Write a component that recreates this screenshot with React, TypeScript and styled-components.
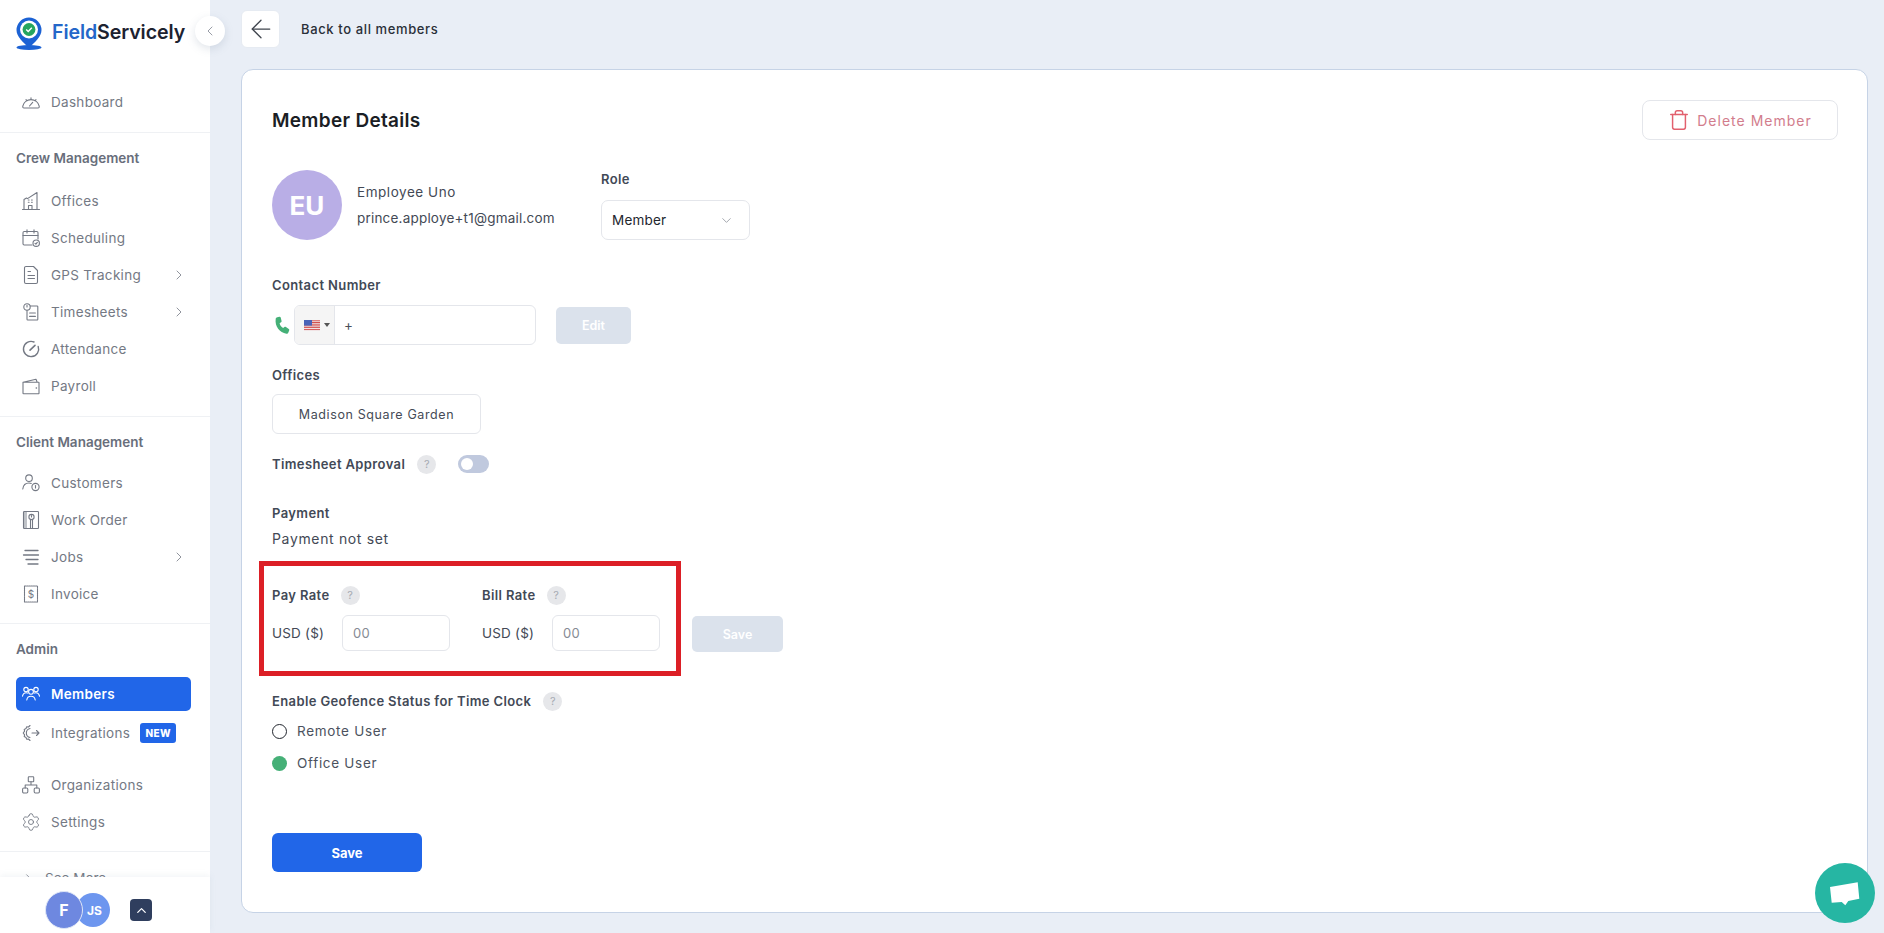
import React from 'react';
import styled, { createGlobalStyle } from 'styled-components';
import { ArrowLeft, ChevronDown, ChevronLeft, ChevronRight, ChevronUp, Settings, Trash } from 'lucide-react';

const GlobalStyle = createGlobalStyle`
  html, body {
    margin: 0;
    padding: 0;
    height: 100%;
    background: #e9eef6;
    font-family: Inter, "Open Sans", "Liberation Sans", sans-serif;
    overflow: hidden;
  }
  * { box-sizing: border-box; }
`;

const Page = styled.div`
  display: flex;
  width: 1884px;
  height: 933px;
  position: relative;
`;

const Sidebar = styled.aside`
  position: relative;
  width: 210px;
  height: 933px;
  flex-shrink: 0;
  display: flex;
  flex-direction: column;
  background: #ffffff;
`;

const LogoBar = styled.div`
  height: 62px;
  display: flex;
  align-items: center;
  gap: 10px;
  padding-left: 16px;
  svg { margin-top: 5px; }
`;

const LogoText = styled.div`
  margin-top: 1px;
  font-size: 19.6px;
  font-weight: 600;
  color: #1c2230;
  letter-spacing: -0.1px;
  span { color: #2467c9; }
`;

const CollapseButton = styled.button`
  position: absolute;
  left: 195px;
  top: 16px;
  width: 30px;
  height: 30px;
  border: none;
  border-radius: 50%;
  padding: 0;
  background: #ffffff;
  color: #7d838f;
  box-shadow: 0 3px 8px rgba(120, 135, 160, 0.22);
  display: flex;
  align-items: center;
  justify-content: center;
`;

const NavScroll = styled.nav`
  flex: 1;
  min-height: 0;
  overflow: hidden;
  padding-top: 21.5px;
`;

const Divider = styled.div<{ $top: number }>`
  height: 1px;
  background: #eff1f4;
  margin-top: ${(p) => p.$top}px;
`;

const SectionTitle = styled.div<{ $top: number; $bottom: number }>`
  height: 18px;
  line-height: 18px;
  padding-left: 16px;
  margin: ${(p) => p.$top}px 0 ${(p) => p.$bottom}px;
  font-size: 13.5px;
  font-weight: 600;
  color: #686e7b;
`;

const NavItem = styled.div<{ $top?: number }>`
  height: 37px;
  margin-top: ${(p) => p.$top ?? 0}px;
  padding: 0 23px 0 21px;
  display: flex;
  align-items: center;
  gap: 10px;
  font-size: 13.5px;
  font-weight: 400;
  letter-spacing: 0.3px;
  color: #747984;
  svg { flex-shrink: 0; }
`;

const ActiveItem = styled.div`
  height: 34px;
  margin: 0 19px 0 16px;
  padding-left: 5px;
  border-radius: 5px;
  background: #2166e8;
  display: flex;
  align-items: center;
  gap: 10px;
  font-size: 13.5px;
  font-weight: 600;
  letter-spacing: 0.3px;
  color: #ffffff;
`;

const NavLabel = styled.span`
  white-space: nowrap;
`;

const MoreChevron = styled(ChevronRight)`
  margin-left: auto;
`;

const NewBadge = styled.span`
  width: 36px;
  height: 20px;
  border-radius: 3px;
  background: #2166e8;
  color: #ffffff;
  font-size: 10px;
  font-weight: 800;
  display: flex;
  align-items: center;
  justify-content: center;
`;

const SeeMore = styled.div`
  height: 37px;
  margin-top: 8px;
  padding-left: 21px;
  display: flex;
  align-items: center;
  gap: 9px;
  font-size: 13.5px;
  color: #747984;
`;

const SidebarFooter = styled.div`
  height: 56px;
  flex-shrink: 0;
  background: #ffffff;
  box-shadow: 0 -2px 6px rgba(140, 155, 180, 0.1);
  padding: 10px 0 0 45px;
  display: flex;
  align-items: center;
`;

const UserBubble = styled.div<{ $size: number; $bg: string; $fs: number; $front?: boolean }>`
  width: ${(p) => p.$size}px;
  height: ${(p) => p.$size}px;
  border-radius: 50%;
  background: ${(p) => p.$bg};
  color: #ffffff;
  font-size: ${(p) => p.$fs}px;
  font-weight: 700;
  display: flex;
  align-items: center;
  justify-content: center;
  position: relative;
  z-index: ${(p) => (p.$front ? 1 : 0)};
  border: ${(p) => (p.$front ? '1px solid #dfe6f7' : 'none')};
  margin-left: ${(p) => (p.$front ? 0 : -7)}px;
  padding-left: ${(p) => (p.$front ? 0 : 3)}px;
`;

const UpButton = styled.div`
  width: 22px;
  height: 22px;
  margin-left: 20px;
  border-radius: 4px;
  background: #2f3e5e;
  color: #ffffff;
  display: flex;
  align-items: center;
  justify-content: center;
`;

const Main = styled.main`
  flex: 1;
  min-width: 0;
  display: flex;
  flex-direction: column;
  padding: 10px 16px 20px 31px;
`;

const TopBar = styled.div`
  height: 38px;
  display: flex;
  align-items: center;
  gap: 21px;
  margin-bottom: 21px;
`;

const BackButton = styled.div`
  width: 39px;
  height: 38px;
  border-radius: 6px;
  background: #ffffff;
  border: 1px solid #e6ebf2;
  color: #3f444d;
  display: flex;
  align-items: center;
  justify-content: center;
`;

const BackText = styled.div`
  font-size: 13px;
  font-weight: 500;
  letter-spacing: 0.62px;
  color: #2a2f38;
`;

const Card = styled.section`
  flex: 1;
  background: #ffffff;
  border: 1px solid #c6d3e6;
  border-radius: 12px;
  padding: 30px 29px 0 30px;
`;

const TitleRow = styled.div`
  height: 40px;
  display: flex;
  align-items: center;
  justify-content: space-between;
`;

const Title = styled.h1`
  margin: 0;
  font-size: 19px;
  font-weight: 600;
  letter-spacing: 0.3px;
  color: #1b1e25;
`;

const DeleteButton = styled.div`
  width: 196px;
  height: 40px;
  border: 1px solid #e4e6eb;
  border-radius: 8px;
  display: flex;
  align-items: center;
  justify-content: center;
  gap: 7px;
  font-size: 14px;
  letter-spacing: 1px;
  color: #d27d8d;
  svg { color: #e2606e; }
`;

const ProfileRow = styled.div`
  display: flex;
  margin-top: 30px;
`;

const Avatar = styled.div`
  width: 70px;
  height: 70px;
  border-radius: 50%;
  background: #b9aee6;
  color: #ffffff;
  font-size: 26px;
  font-weight: 700;
  display: flex;
  align-items: center;
  justify-content: center;
`;

const NameBlock = styled.div`
  width: 244px;
  margin-left: 15px;
  padding-top: 13px;
  display: flex;
  flex-direction: column;
  gap: 8px;
`;

const NameLine = styled.div<{ $spacing: number }>`
  height: 18px;
  line-height: 18px;
  font-size: 13.5px;
  letter-spacing: ${(p) => p.$spacing}px;
  color: #434955;
`;

const FieldLabel = styled.div<{ $top?: number; $bottom?: number }>`
  height: 18px;
  line-height: 18px;
  margin: ${(p) => p.$top ?? 0}px 0 ${(p) => p.$bottom ?? 0}px;
  font-size: 13px;
  font-weight: 600;
  letter-spacing: 0.38px;
  color: #424956;
  white-space: nowrap;
`;

const RoleSelect = styled.div`
  width: 149px;
  height: 40px;
  margin-top: 12px;
  padding: 0 15px 0 10px;
  border: 1px solid #e4e6eb;
  border-radius: 7px;
  display: flex;
  align-items: center;
  justify-content: space-between;
  font-size: 13.5px;
  letter-spacing: 0.2px;
  color: #22262e;
  svg { color: #868b94; }
`;

const PhoneRow = styled.div`
  display: flex;
  align-items: center;
`;

const PhoneIcon = styled.svg`
  width: 19px;
  height: 19px;
  margin-right: 3px;
  color: #45b077;
`;

const PhoneInput = styled.div`
  width: 242px;
  height: 40px;
  border: 1px solid #e4e6eb;
  border-radius: 6px;
  display: flex;
  align-items: center;
  overflow: hidden;
`;

const FlagBox = styled.div`
  width: 40px;
  height: 100%;
  background: #f5f5f5;
  border-right: 1px solid #e4e6eb;
  display: flex;
  align-items: center;
  gap: 4px;
  padding-left: 9px;
`;

const Caret = styled.span`
  width: 0;
  height: 0;
  border-left: 3px solid transparent;
  border-right: 3px solid transparent;
  border-top: 4px solid #555555;
`;

const PhonePlus = styled.span`
  margin-left: 9px;
  font-size: 13.5px;
  color: #4a4f58;
`;

const MutedButton = styled.div<{ $w: number; $h: number; $left: number }>`
  width: ${(p) => p.$w}px;
  height: ${(p) => p.$h}px;
  margin-left: ${(p) => p.$left}px;
  border-radius: 5px;
  background: #dbe2ec;
  color: #ffffff;
  font-size: 12.5px;
  font-weight: 600;
  display: flex;
  align-items: center;
  justify-content: center;
`;

const RateSave = styled(MutedButton)`
  margin-bottom: 24px;
`;

const OfficeBox = styled.div`
  width: 209px;
  height: 40px;
  border: 1px solid #e4e6eb;
  border-radius: 6px;
  display: flex;
  align-items: center;
  justify-content: center;
  font-size: 12.5px;
  letter-spacing: 0.62px;
  color: #454b56;
`;

const InlineRow = styled.div<{ $top: number }>`
  height: 20px;
  margin-top: ${(p) => p.$top}px;
  display: flex;
  align-items: center;
  gap: 12px;
`;

const Help = styled.span`
  width: 19px;
  height: 19px;
  border-radius: 50%;
  background: #e6e7ea;
  color: #a7abb3;
  font-size: 11px;
  display: flex;
  align-items: center;
  justify-content: center;
  flex-shrink: 0;
`;

const Toggle = styled.span`
  width: 31px;
  height: 18px;
  margin-left: 10px;
  border-radius: 9px;
  background: #c0c9de;
  display: flex;
  align-items: center;
  padding-left: 3px;
  &::before {
    content: '';
    width: 12px;
    height: 12px;
    border-radius: 50%;
    background: #ffffff;
  }
`;

const PlainText = styled.div<{ $top?: number }>`
  height: 18px;
  line-height: 18px;
  margin-top: ${(p) => p.$top ?? 0}px;
  font-size: 14px;
  letter-spacing: 0.65px;
  color: #434955;
`;

const RateRow = styled.div`
  display: flex;
  align-items: flex-end;
  margin: 13px 0 0 -13px;
`;

const HighlightBox = styled.div`
  width: 422px;
  height: 115px;
  border: 5px solid #dc1f26;
  padding: 20px 0 0 8px;
  display: flex;
`;

const RateColumn = styled.div`
  flex: 0 0 210px;
`;

const RateHead = styled.div`
  height: 18px;
  display: flex;
  align-items: center;
  gap: 11px;
`;

const RateInputs = styled.div`
  margin-top: 11px;
  display: flex;
  align-items: center;
`;

const Currency = styled.span`
  width: 70px;
  font-size: 13.5px;
  letter-spacing: 0.2px;
  color: #434955;
`;

const RateInput = styled.div`
  width: 108px;
  height: 36px;
  border: 1px solid #e4e6eb;
  border-radius: 6px;
  padding-left: 10px;
  display: flex;
  align-items: center;
  font-size: 13px;
  letter-spacing: 0.4px;
  color: #868b94;
`;

const RadioRow = styled.div<{ $top: number }>`
  height: 20px;
  margin-top: ${(p) => p.$top}px;
  display: flex;
  align-items: center;
  gap: 10px;
  font-size: 13.5px;
  letter-spacing: 0.7px;
  color: #4c525e;
`;

const Radio = styled.span<{ $checked?: boolean }>`
  width: 15px;
  height: 15px;
  border-radius: 50%;
  border: ${(p) => (p.$checked ? 'none' : '1.3px solid #22262e')};
  background: ${(p) => (p.$checked ? '#45b077' : '#ffffff')};
`;

const SaveButton = styled.div`
  width: 150px;
  height: 39px;
  margin-top: 60px;
  border-radius: 6px;
  background: #2166e8;
  color: #ffffff;
  font-size: 13px;
  font-weight: 700;
  display: flex;
  align-items: center;
  justify-content: center;
`;

const ChatBubble = styled.div`
  position: absolute;
  right: 9px;
  bottom: 10px;
  width: 60px;
  height: 60px;
  border-radius: 50%;
  background: #26b6a3;
`;

const stroke = {
  width: 20,
  height: 20,
  viewBox: '0 0 20 20',
  fill: 'none',
  stroke: 'currentColor',
  strokeWidth: 1.1,
  strokeLinecap: 'round' as const,
  strokeLinejoin: 'round' as const,
};

const icons: Record<string, React.ReactNode> = {
  dashboard: (
    <svg {...stroke}>
      <path d="M3 16h14c1 0 1.400-.7 1.200-1.800A8.400 8.400 0 0 0 1.800 14.200C1.600 15.300 2 16 3 16Z" />
      <path d="M8.500 14l3.200-3.600M10 5.700v1.400M5 7.700l.9 1M15 7.700l-.9 1" />
    </svg>
  ),
  offices: (
    <svg {...stroke}>
      <path d="M1.500 18.500h17M3 18.500V8.500l2.500-1.500 1 .6L16 1.500v17" />
      <path d="M7.500 18.500v-4h3.500v4M7.300 11.200h.8M10.500 11.200h.8M7.300 9h.8M10.500 9h.8" />
    </svg>
  ),
  scheduling: (
    <svg {...stroke}>
      <path d="M11 17H3.200A1.200 1.200 0 0 1 2 15.800V4.700a1.200 1.200 0 0 1 1.200-1.200h12.600A1.200 1.200 0 0 1 17 4.700V11" />
      <path d="M2 7.500h15M6 1.800v3.200M13 1.800v3.200" />
      <circle cx="15.200" cy="15.200" r="3.200" />
      <path d="M14 15.400l.9.8 1.400-1.800" />
    </svg>
  ),
  gps: (
    <svg {...stroke}>
      <path d="M12.500 1.500H5A1.500 1.500 0 0 0 3.500 3v14A1.500 1.500 0 0 0 5 18.500h10a1.500 1.500 0 0 0 1.500-1.500V5.500Z" />
      <path d="M7 6.500h2.500M7 10.500h6.500M7 13.500h6.500" />
    </svg>
  ),
  timesheets: (
    <svg {...stroke}>
      <circle cx="6" cy="5" r="3.200" />
      <path d="M6 3.400V5M9.400 4H16a.8.8 0 0 1 .8.8v12.400a.8.8 0 0 1-.8.8H6.800a.8.8 0 0 1-.8-.8V8.400" />
      <path d="M8.600 11h5.800M8.600 14.400h5.800" />
    </svg>
  ),
  attendance: (
    <svg {...stroke}>
      <path strokeWidth="1.400" d="M13 3a7.600 7.600 0 1 0 4.200 4.400" />
      <path strokeWidth="1.600" d="M9 11.200l5-4.800" />
    </svg>
  ),
  payroll: (
    <svg {...stroke}>
      <path d="M2 6.200h15.400a.6.6 0 0 1 .6.6v10.400a.6.6 0 0 1-.6.6H2.600a.6.6 0 0 1-.6-.6V6.200Zm0 0L15 3.200l1.200 3" />
      <path d="M15.200 12h.3" strokeWidth="1.400" />
    </svg>
  ),
  customers: (
    <svg {...stroke}>
      <circle cx="8" cy="5.200" r="3.300" />
      <path d="M1.800 16c.4-3.600 2.800-6 6.200-6 .8 0 1.600.1 2.300.4" />
      <circle cx="14.500" cy="14" r="3.600" />
      <path d="M14.500 12.600v2.400" />
    </svg>
  ),
  workorder: (
    <svg {...stroke}>
      <rect x="2.500" y="1.500" width="15" height="17" rx="0.8" />
      <path d="M2.500 2h3.500v16H2.500Z" fill="currentColor" fillOpacity="0.45" stroke="none" />
      <circle cx="10.500" cy="7" r="2.600" />
      <path d="M9.500 9.400V18M11.500 9.400V18M10.500 5.500v1.400" />
    </svg>
  ),
  jobs: (
    <svg {...stroke} strokeWidth="1.300">
      <path d="M4 3.500h13M2.500 8h15M5 12.500h12M7 17h10" />
    </svg>
  ),
  invoice: (
    <svg {...stroke}>
      <rect x="3.500" y="2" width="13" height="16" strokeDasharray="1.400 0.8" />
      <text x="10" y="13.600" fontSize="10" fontFamily="Inter, sans-serif" textAnchor="middle" fill="currentColor" stroke="none">$</text>
    </svg>
  ),
  members: (
    <svg {...stroke}>
      <circle cx="5" cy="5.600" r="2.200" />
      <circle cx="15" cy="5.600" r="2.200" />
      <circle cx="10" cy="7.800" r="2.400" />
      <path d="M1.500 12.200c.4-2 1.600-3.400 3.600-3.400.5 0 1 .1 1.400.3M18.500 12.200c-.4-2-1.600-3.400-3.600-3.400-.5 0-1 .1-1.400.3M5.800 16c.3-2.600 2-3.800 4.200-3.800s3.900 1.200 4.200 3.800" />
    </svg>
  ),
  integrations: (
    <svg {...stroke}>
      <path d="M9 2.500 7.500 4 5.600 3.800 5 5.600 3.200 6.400l.4 1.800L2.200 10l1.400 1.800-.4 1.800 1.800.8.6 1.800 1.900-.2L9 17.500" />
      <path d="M9 5.500A4.600 4.600 0 0 0 9 14.500M11 10h7M15.500 7.500 18 10l-2.500 2.500" />
    </svg>
  ),
  organizations: (
    <svg {...stroke}>
      <rect x="7.300" y="1.800" width="5.400" height="5" rx="0.6" />
      <rect x="1.600" y="13" width="5.200" height="5" rx="1.200" />
      <rect x="13.200" y="13" width="5.200" height="5" rx="1.200" />
      <path d="M10 6.800v3.200M4.200 13v-3h11.600v3" />
    </svg>
  ),
};

const crew = [
  { key: 'offices', label: 'Offices' },
  { key: 'scheduling', label: 'Scheduling' },
  { key: 'gps', label: 'GPS Tracking', more: true },
  { key: 'timesheets', label: 'Timesheets', more: true },
  { key: 'attendance', label: 'Attendance' },
  { key: 'payroll', label: 'Payroll' },
];

const client = [
  { key: 'customers', label: 'Customers' },
  { key: 'workorder', label: 'Work Order' },
  { key: 'jobs', label: 'Jobs', more: true },
  { key: 'invoice', label: 'Invoice' },
];

const renderItem = (item: { key: string; label: string; more?: boolean }) => (
  <NavItem key={item.key}>
    {icons[item.key]}
    <NavLabel>{item.label}</NavLabel>
    {item.more && <MoreChevron size={16} strokeWidth={1.2} />}
  </NavItem>
);

const FlagIcon = () => (
  <svg width="16" height="11" viewBox="0 0 16 11">
    <rect width="16" height="11" fill="#f4f4f6" />
    <path d="M0 .8h16M0 2.500h16M0 4.200h16M0 5.900h16M0 7.600h16M0 9.600h16" stroke="#d2504f" strokeWidth="1" />
    <rect width="8" height="5.600" fill="#4a63b8" />
  </svg>
);

const App: React.FC = () => {
  return (
    <Page>
      <GlobalStyle />
      <Sidebar>
        <LogoBar>
          <svg width="26" height="33" viewBox="0 0 26 33">
            <ellipse cx="13" cy="30.500" rx="12.500" ry="2.400" fill="#1c62d4" />
            <path d="M13 0.500a12.500 12.500 0 0 1 12.500 12.500c0 6.600-6.500 12-12.500 18C7 25 0.500 19.600 0.500 13A12.500 12.500 0 0 1 13 0.500Z" fill="#1c62d4" />
            <circle cx="13" cy="12.500" r="9" fill="#ffffff" />
            <circle cx="13" cy="12.500" r="6.400" fill="#25a55f" />
            <path d="M10.200 12.600l2 2 3.600-3.800" fill="none" stroke="#ffffff" strokeWidth="1.400" />
          </svg>
          <LogoText><span>Field</span>Servicely</LogoText>
        </LogoBar>
        <CollapseButton><ChevronLeft size={16} strokeWidth={1.2} /></CollapseButton>
        <NavScroll>
          <NavItem>{icons.dashboard}<NavLabel>Dashboard</NavLabel></NavItem>
          <Divider $top={11} />
          <SectionTitle $top={16} $bottom={16}>Crew Management</SectionTitle>
          {crew.map(renderItem)}
          <Divider $top={11} />
          <SectionTitle $top={16} $bottom={14}>Client Management</SectionTitle>
          {client.map(renderItem)}
          <Divider $top={10} />
          <SectionTitle $top={16} $bottom={19}>Admin</SectionTitle>
          <ActiveItem>{icons.members}<NavLabel>Members</NavLabel></ActiveItem>
          <NavItem $top={4}>
            {icons.integrations}
            <NavLabel>Integrations</NavLabel>
            <NewBadge>NEW</NewBadge>
          </NavItem>
          <NavItem $top={15}>{icons.organizations}<NavLabel>Organizations</NavLabel></NavItem>
          <NavItem><Settings size={20} strokeWidth={1.1} /><NavLabel>Settings</NavLabel></NavItem>
          <Divider $top={10} />
          <SeeMore><ChevronRight size={15} strokeWidth={1.2} />See More</SeeMore>
        </NavScroll>
        <SidebarFooter>
          <UserBubble $size={38} $bg="#6e88e0" $fs={16} $front>F</UserBubble>
          <UserBubble $size={34} $bg="#6d96ef" $fs={12}>JS</UserBubble>
          <UpButton><ChevronUp size={15} strokeWidth={2} /></UpButton>
        </SidebarFooter>
      </Sidebar>

      <Main>
        <TopBar>
          <BackButton><ArrowLeft size={30} strokeWidth={1} /></BackButton>
          <BackText>Back to all members</BackText>
        </TopBar>
        <Card>
          <TitleRow>
            <Title>Member Details</Title>
            <DeleteButton><Trash size={22} strokeWidth={1.6} />Delete Member</DeleteButton>
          </TitleRow>

          <ProfileRow>
            <Avatar>EU</Avatar>
            <NameBlock>
              <NameLine $spacing={0.55}>Employee Uno</NameLine>
              <NameLine $spacing={0.2}>prince.apploye+t1@gmail.com</NameLine>
            </NameBlock>
            <div>
              <FieldLabel>Role</FieldLabel>
              <RoleSelect>Member<ChevronDown size={15} strokeWidth={1.2} /></RoleSelect>
            </div>
          </ProfileRow>

          <FieldLabel $top={36} $bottom={11}>Contact Number</FieldLabel>
          <PhoneRow>
            <PhoneIcon viewBox="0 0 24 24" fill="currentColor">
              <path d="M6.600 1.600 9.400 1c.8-.1 1.400.3 1.600 1l1.100 4.200c.2.7-.1 1.300-.7 1.700L9.600 9c.6 2.600 2 4.700 4.400 6l1.700-1.100c.6-.4 1.300-.4 1.900 0l3.600 2.600c.6.4.8 1.100.5 1.800l-1.200 2.800c-.4.9-1.300 1.500-2.300 1.300C9.800 21.400 3.200 13.400 4.700 3.300 4.900 2.400 5.600 1.800 6.600 1.600Z" />
            </PhoneIcon>
            <PhoneInput>
              <FlagBox><FlagIcon /><Caret /></FlagBox>
              <PhonePlus>+</PhonePlus>
            </PhoneInput>
            <MutedButton $w={75} $h={37} $left={20}>Edit</MutedButton>
          </PhoneRow>

          <FieldLabel $top={21} $bottom={10}>Offices</FieldLabel>
          <OfficeBox>Madison Square Garden</OfficeBox>

          <InlineRow $top={20}>
            <FieldLabel>Timesheet Approval</FieldLabel>
            <Help>?</Help>
            <Toggle />
          </InlineRow>

          <FieldLabel $top={30}>Payment</FieldLabel>
          <PlainText $top={8}>Payment not set</PlainText>

          <RateRow>
            <HighlightBox>
              <RateColumn>
                <RateHead><FieldLabel>Pay Rate</FieldLabel><Help>?</Help></RateHead>
                <RateInputs><Currency>USD ($)</Currency><RateInput>00</RateInput></RateInputs>
              </RateColumn>
              <RateColumn>
                <RateHead><FieldLabel>Bill Rate</FieldLabel><Help>?</Help></RateHead>
                <RateInputs><Currency>USD ($)</Currency><RateInput>00</RateInput></RateInputs>
              </RateColumn>
            </HighlightBox>
            <RateSave $w={91} $h={36} $left={11}>Save</RateSave>
          </RateRow>

          <InlineRow $top={15}>
            <FieldLabel>Enable Geofence Status for Time Clock</FieldLabel>
            <Help>?</Help>
          </InlineRow>
          <RadioRow $top={10}><Radio />Remote User</RadioRow>
          <RadioRow $top={12}><Radio $checked />Office User</RadioRow>

          <SaveButton>Save</SaveButton>
        </Card>
      </Main>

      <ChatBubble>
        <svg width="60" height="60" viewBox="0 0 60 60">
          <path d="M15 24 42.700 19.300 44.300 35.700 33.300 38 30.300 42.300 26.700 39 16.700 39.700Z" fill="#ffffff" />
        </svg>
      </ChatBubble>
    </Page>
  );
};

export default App;
